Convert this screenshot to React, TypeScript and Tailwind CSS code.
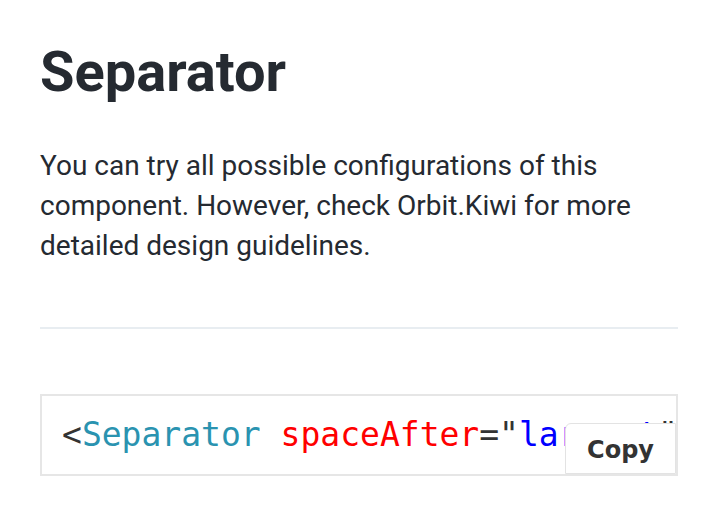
import React from 'react';

/* Página de documentación del componente Separator:
   título, descripción, separador y bloque de código con botón Copy. */

const ink = 'text-[#252a31]';

function CodeBlock() {
  return (
    <div className="relative border-2 border-[#e6e6e6] bg-white">
      <pre className="overflow-hidden whitespace-pre px-[20px] py-[20px] text-[33px] leading-[38px] font-['DejaVu_Sans_Mono',monospace] text-[#333]">
        <span>&lt;</span>
        <span className="text-[#2a93b0]">Separator</span>{' '}
        <span className="text-[#ff0000]">spaceAfter</span>
        <span>=&quot;</span>
        <span className="text-[#0000ff]">largest</span>
        <span>&quot; /&gt;</span>
      </pre>
      <button className="absolute right-0 bottom-0 border border-[#e3e3e3] rounded-tl-[6px] bg-white px-[21px] pt-[12px] pb-[9px] text-[24px] leading-[28px] font-bold font-['DejaVu_Sans',sans-serif] text-[#333]">
        Copy
      </button>
    </div>
  );
}

export default function App() {
  return (
    <div className="w-[718px] h-[516px] bg-white overflow-hidden font-['Roboto',sans-serif]">
      <div className="px-[40px] pt-[39px]">
        <h1 className={`text-[56px] leading-[67px] font-bold ${ink}`}>Separator</h1>
        <p className={`mt-[40px] text-[28px] leading-[40px] ${ink}`}>
          You can try all possible configurations of this component. However, check Orbit.Kiwi for
          more detailed design guidelines.
        </p>
        <hr className="mt-[61px] border-0 h-[2px] bg-[#e8edf1]" />
        <div className="mt-[65px]">
          <CodeBlock />
        </div>
      </div>
    </div>
  );
}
